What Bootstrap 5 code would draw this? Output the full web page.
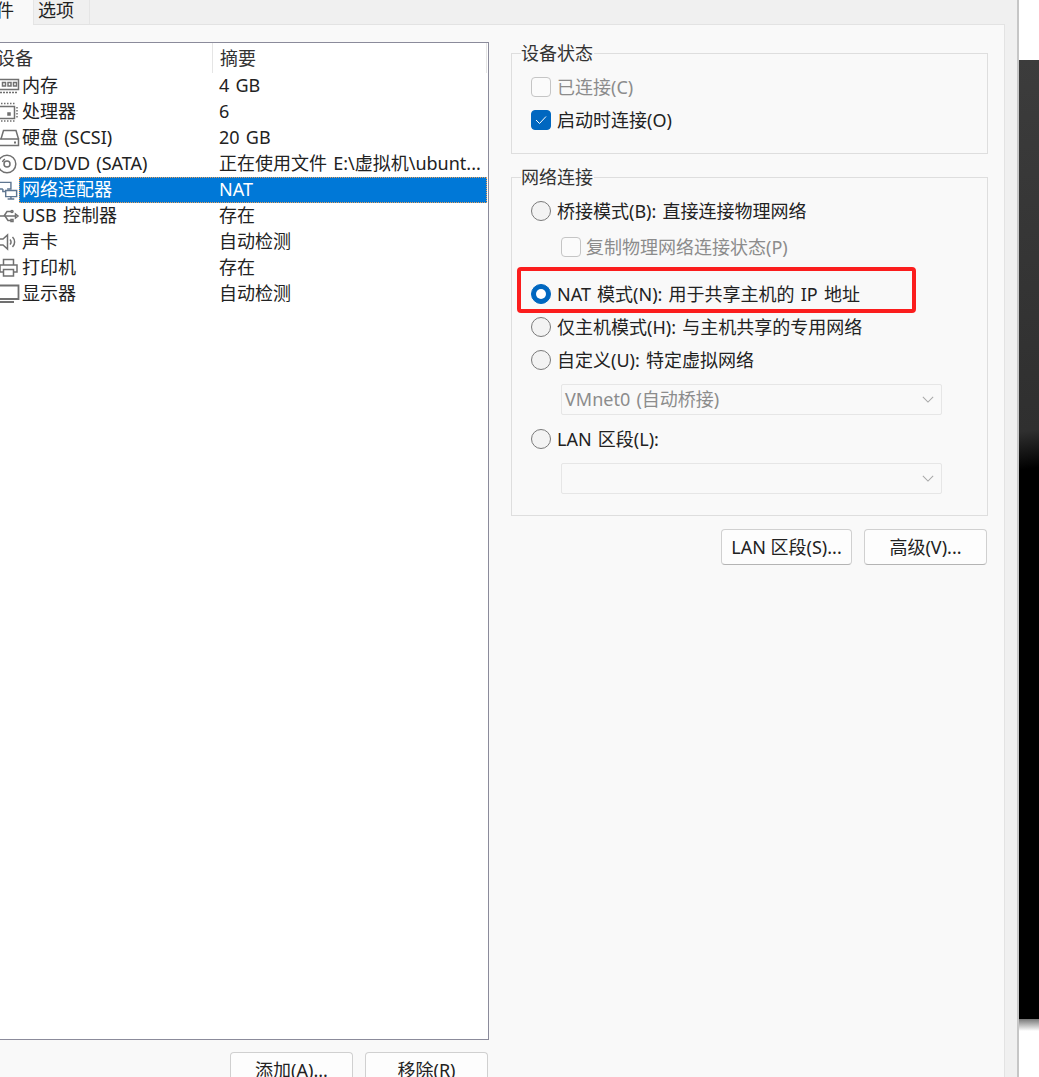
<!DOCTYPE html>
<html lang="zh-CN">
<head>
<meta charset="utf-8">
<title>网络适配器</title>
<link href="https://cdn.jsdelivr.net/npm/bootstrap@5.3.0/dist/css/bootstrap.min.css" rel="stylesheet">
<style>
html,body{height:100%;margin:0;overflow:hidden;background:#fff}
body{font-family:"Noto Sans","Noto Sans CJK SC",sans-serif;font-size:18px;word-spacing:1.5px;line-height:26px;color:#222;font-weight:400}
.stage{width:1039px;height:1077px;overflow:hidden}
.vm-window{width:1019px;flex:none;background:#f0f0f0;border-right:2px solid #c6c6c6}
.tabstrip{height:25px;flex:none;border-bottom:1px solid #e3e3e3;width:1005px}
.tab-on{width:33px;background:#f9f9f9;overflow:hidden;line-height:20px;height:25px;margin-bottom:-1px}
.tab-on span{margin-left:-22px;display:block;white-space:nowrap}
.tab-off{width:57px;border:1px solid #e5e5e5;border-top:0;border-bottom:0;padding-left:4px;line-height:21px}
.panel{width:1005px;background:#f9f9f9;border-right:1px solid #e3e3e3;padding-top:17px;min-height:0}
.leftcol{width:489px;flex:none}
.listbox{height:998px;width:489px;background:#fff;border:1px solid #8b8b9b;border-left:0;flex:none}
.listhead{height:30px;line-height:30px;color:#333}
.listhead .c1{width:212px;flex:none;margin-left:-3px;margin-right:3px}
.listhead .c2{flex:1;border-left:1px solid #e5e5e5;border-right:1px solid #e5e5e5;padding-left:7px;margin-right:1px}
.devrow{height:26px;line-height:25px;padding-right:1px}
.devrow svg{width:20px;height:20px;flex:none;margin-top:3px;fill:none;stroke:#707070;stroke-width:1.5}
.devrow svg.netglyph{width:19px}
.devrow .dname{width:192px;flex:none;padding-left:2px}
.devrow .dval{flex:1;padding-left:7px;white-space:nowrap}
.devrow.sel .dcell{background:#0078d7;color:#fff;outline:1px dotted #e9a05a;outline-offset:-1px;display:flex;flex:1}
.devrow.sel .dname{width:193px;padding-left:3px}
.devrow.sel .dval{padding-left:7px}
.devrow.sel svg{stroke:#5f7690}
.sidebtns{gap:12px;margin-top:12px;padding-left:230px;padding-right:1px}
.vmbtn{height:36px;width:123px;background:#fdfdfd;border:1px solid #d0d0d0;border-bottom-color:#b4b4b4;border-radius:4px;padding:0;font-size:18px;line-height:34px;color:#222;flex:none;text-align:center;white-space:nowrap}
.vmbtn.wide{width:131px}
.btnline{gap:12px;padding-right:1px}
.rightcol{width:477px;margin-left:22px;flex:none;padding-top:11px}
.gbox{border:1px solid #dedede;position:relative;padding:0 19px}
.gbox.one{height:101px;margin-bottom:23px}
.gbox.two{height:339px;margin-bottom:13px}
.gtitle{position:absolute;left:9px;top:-13px;background:#f9f9f9;line-height:24px;color:#333;padding-right:1px}
.optrow{height:26px;gap:6px;white-space:nowrap}
.optrow.sub{margin-left:30px;gap:5px}
.optrow.off{color:#8c8c8c}
.mark-box{width:20px;height:20px;flex:none;border:1px solid #8d8d8d;border-radius:4px;background:#f7f7f7;display:flex;align-items:center;justify-content:center}
.optrow.off .mark-box{border-color:#c5c5c5;background:#fbfbfb}
.mark-box.on{background:#0067c0;border-color:#0067c0}
.mark-box.round{border-radius:50%;border-color:#7a7a7a;background:#f3f3f3}
.mark-box.round.on{background:#0067c0;border-color:#0067c0}
.mark-box.round.on::after{content:"";width:10px;height:10px;border-radius:50%;background:#fff}
.fakeselect{margin-left:30px;height:31px;width:381px;background:#f9f9f9;border:1px solid #e6e6e6;border-radius:2px;color:#8c8c8c;padding:0 3px;line-height:29px;justify-content:space-between;align-items:center}
.fakeselect svg{width:12px;height:7px;fill:none;stroke:#a8a8a8;stroke-width:1.2;margin-right:4px;flex:none}
.redmark{position:absolute;left:5px;top:89px;width:399px;height:46px;border:4px solid #fb1d1d;border-radius:4px;pointer-events:none}
.g1a{margin-top:20px}.g1b{margin-top:7px}
.g2a{margin-top:20px}.g2b{margin-top:10px}.g2c{margin-top:21px}.g2d{margin-top:7px}.g2e{margin-top:7px}
.g2f{margin-top:11px}.g2g{margin-top:11px}.g2h{margin-top:11px}
.backdrop{flex:1;min-width:0}
.bd-white{height:60px;background:#fff}
.bd-dark{height:420px;background:linear-gradient(172deg,#3c3c3c 0,#2f2f2f 88%,#000 97%)}
.bd-black{height:539px;background:#000}
.bd-fade{height:12px;background:linear-gradient(#777,#fff)}
.bd-rest{flex:1;background:#fff}
</style>
</head>
<body>
<div class="stage d-flex">
  <div class="vm-window d-flex flex-column">
    <div class="tabstrip d-flex">
      <div class="tab-on"><span>硬件</span></div>
      <div class="tab-off">选项</div>
    </div>
    <div class="panel d-flex flex-grow-1">
      <div class="leftcol d-flex flex-column">
        <div class="listbox">
          <div class="listhead d-flex"><div class="c1">设备</div><div class="c2">摘要</div></div>
          <div class="devrow d-flex">
            <svg viewBox="0 0 20 20"><path d="M-2 3.5H18.5V13.5H-2"/><path d="M2.5 6.5h3v3.5h-3zM8 6.5h3v3.5H8zM13.5 6.5h3v3.5h-3z"/><path d="M0 16.5H18" stroke-dasharray="2 1"/></svg>
            <div class="dname">内存</div><div class="dval">4 GB</div>
          </div>
          <div class="devrow d-flex">
            <svg viewBox="0 0 20 20"><path d="M0 4.5H14.5V16.5H0"/><path d="M1 1.5H16M1 19H16M17 5V16" stroke-dasharray="1.5 1.5"/><path d="M8 11h2v2H8z" fill="#707070"/></svg>
            <div class="dname">处理器</div><div class="dval">6</div>
          </div>
          <div class="devrow d-flex">
            <svg viewBox="0 0 20 20"><path d="M1 11 3.5 2.5H16L18.5 11"/><path d="M0 11H18.5V17.5H0"/><path d="M14 14.5h2" stroke-width="2"/></svg>
            <div class="dname">硬盘 (SCSI)</div><div class="dval">20 GB</div>
          </div>
          <div class="devrow d-flex">
            <svg viewBox="0 0 20 20"><circle cx="7" cy="10" r="8.8"/><circle cx="7" cy="10" r="3"/><path d="M2.5 8A5 5 0 0 1 5 5.2"/></svg>
            <div class="dname">CD/DVD (SATA)</div><div class="dval">正在使用文件 E:\虚拟机\ubunt...</div>
          </div>
          <div class="devrow sel d-flex">
            <svg class="netglyph" viewBox="0 0 20 20"><path d="M0 2H11.5V9H7.5M0 9H3"/><path d="M6 10.5H17.5V17H6zM11.5 17V19.5M8 19.5H15"/><path d="M3 9V11.5H6"/></svg>
            <div class="dcell"><div class="dname">网络适配器</div><div class="dval">NAT</div></div>
          </div>
          <div class="devrow d-flex">
            <svg viewBox="0 0 20 20"><path d="M0 10H15.5M15.5 8V12L18 10Z"/><path d="M4 10 7 5.5H11M5 10 8 14.5H11"/><circle cx="12" cy="5.5" r="1"/><path d="M11 13.5h2v2h-2z"/></svg>
            <div class="dname">USB 控制器</div><div class="dval">存在</div>
          </div>
          <div class="devrow d-flex">
            <svg viewBox="0 0 20 20"><path d="M-1 7H3L7.5 3V17L3 13H-1Z"/><path d="M10 7.5a3.5 3.5 0 0 1 0 5M12.5 5a7 7 0 0 1 0 10"/></svg>
            <div class="dname">声卡</div><div class="dval">自动检测</div>
          </div>
          <div class="devrow d-flex">
            <svg viewBox="0 0 20 20"><path d="M3.5 7V1.5H13.5V7"/><path d="M3 14H0V7H17V14H14"/><path d="M3.5 11.5H13.5V18H3.5Z"/></svg>
            <div class="dname">打印机</div><div class="dval">存在</div>
          </div>
          <div class="devrow d-flex">
            <svg viewBox="0 0 20 20"><path d="M-1 1.5H18.5V15H-1" stroke-width="1.8"/><path d="M-1 18H14" stroke-width="2"/></svg>
            <div class="dname">显示器</div><div class="dval">自动检测</div>
          </div>
        </div>
        <div class="sidebtns d-flex">
          <button type="button" class="btn vmbtn">添加(A)...</button>
          <button type="button" class="btn vmbtn">移除(R)</button>
        </div>
      </div>
      <div class="rightcol">
        <div class="gbox one">
          <div class="gtitle">设备状态</div>
          <div class="optrow off d-flex align-items-center g1a"><span class="mark-box"></span><span>已连接(C)</span></div>
          <div class="optrow d-flex align-items-center g1b"><span class="mark-box on"><svg width="12" height="10" viewBox="0 0 12 10" fill="none" stroke="#fff" stroke-width="1"><path d="M1 5 4.5 8.5 11 1.5"/></svg></span><span>启动时连接(O)</span></div>
        </div>
        <div class="gbox two">
          <div class="gtitle">网络连接</div>
          <div class="optrow d-flex align-items-center g2a"><span class="mark-box round"></span><span>桥接模式(B): 直接连接物理网络</span></div>
          <div class="optrow sub off d-flex align-items-center g2b"><span class="mark-box"></span><span>复制物理网络连接状态(P)</span></div>
          <div class="optrow d-flex align-items-center g2c"><span class="mark-box round on"></span><span>NAT 模式(N): 用于共享主机的 IP 地址</span></div>
          <div class="optrow d-flex align-items-center g2d"><span class="mark-box round"></span><span>仅主机模式(H): 与主机共享的专用网络</span></div>
          <div class="optrow d-flex align-items-center g2e"><span class="mark-box round"></span><span>自定义(U): 特定虚拟网络</span></div>
          <div class="fakeselect d-flex g2f"><span>VMnet0 (自动桥接)</span><svg viewBox="0 0 14 8"><path d="M1 1 7 7 13 1"/></svg></div>
          <div class="optrow d-flex align-items-center g2g"><span class="mark-box round"></span><span>LAN 区段(L):</span></div>
          <div class="fakeselect d-flex g2h"><span></span><svg viewBox="0 0 14 8"><path d="M1 1 7 7 13 1"/></svg></div>
          <div class="redmark"></div>
        </div>
        <div class="btnline d-flex justify-content-end">
          <button type="button" class="btn vmbtn wide">LAN 区段(S)...</button>
          <button type="button" class="btn vmbtn">高级(V)...</button>
        </div>
      </div>
    </div>
  </div>
  <div class="backdrop d-flex flex-column">
    <div class="bd-white"></div>
    <div class="bd-dark"></div>
    <div class="bd-black"></div>
    <div class="bd-fade"></div>
    <div class="bd-rest"></div>
  </div>
</div>
<script src="https://cdn.jsdelivr.net/npm/bootstrap@5.3.0/dist/js/bootstrap.bundle.min.js"></script>
</body>
</html>
